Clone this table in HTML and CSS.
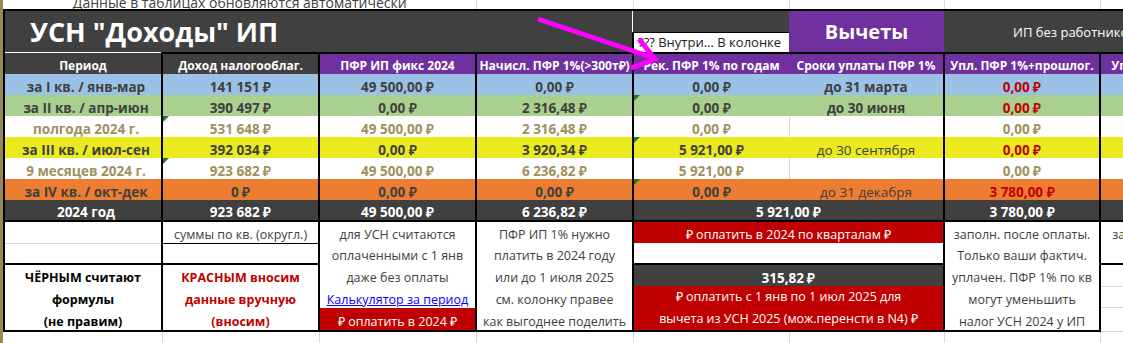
FILE: index.html
```html
<!DOCTYPE html>
<html lang="ru">
<head>
    <meta charset="UTF-8">
    <title>УСН Доходы ИП</title>
    <link rel="stylesheet" href="styles.css">
</head>
<body>
<div class="sheet">
    <table class="grid">
        <colgroup>
            <col class="w1"><col class="w2"><col class="w3"><col class="w4">
            <col class="w5"><col class="w6"><col class="w7"><col class="w8">
        </colgroup>

        <!-- верхняя строка, видна наполовину -->
        <tr class="r-top">
            <td colspan="3" class="note"><div class="cut"><span>Данные в таблицах обновляются автоматически</span></div></td>
            <td class="gl"></td><td class="gl"></td><td class="gl"></td><td class="gl"></td><td class="gl"></td>
        </tr>

        <!-- заголовок -->
        <tr class="r-t1">
            <td colspan="4" rowspan="2" class="title L">УСН "Доходы" ИП</td>
            <td class="dark"></td>
            <td rowspan="2" class="vych">Вычеты</td>
            <td colspan="2" rowspan="2" class="ipbez">ИП без работников (фиксированные взносы)</td>
        </tr>
        <tr class="r-t2">
            <td class="comment L">??? Внутри... В колонке</td>
        </tr>

        <tr class="head">
            <td class="dark L">Период</td>
            <td class="dark L T">Доход налогооблаг.</td>
            <td class="purple L T">ПФР ИП фикс 2024</td>
            <td class="purple L T">Начисл. ПФР 1%(&gt;300т₽)</td>
            <td class="purple L T">Рек. ПФР 1% по годам</td>
            <td class="purple T">Сроки уплаты ПФР 1%</td>
            <td class="purple L T">Упл. ПФР 1%+прошлог.</td>
            <td class="purple L T">Упл. налог УСН за год</td>
        </tr>

        <tr class="data blue">
            <td>за I кв. / янв-мар</td>
            <td>141 151 ₽</td>
            <td>49 500,00 ₽</td>
            <td>0,00 ₽</td>
            <td>0,00 ₽</td>
            <td class="c6">до 31 марта</td>
            <td class="red">0,00 ₽</td>
            <td></td>
        </tr>
        <tr class="data green">
            <td>за II кв. / апр-июн</td>
            <td>390 497 ₽</td>
            <td>0,00 ₽</td>
            <td>2 316,48 ₽</td>
            <td class="flag">0,00 ₽</td>
            <td class="c6">до 30 июня</td>
            <td class="red">0,00 ₽</td>
            <td></td>
        </tr>
        <tr class="data white">
            <td>полгода 2024 г.</td>
            <td class="flag">531 648 ₽</td>
            <td>49 500,00 ₽</td>
            <td>2 316,48 ₽</td>
            <td>0,00 ₽</td>
            <td class="c6"></td>
            <td>0,00 ₽</td>
            <td></td>
        </tr>
        <tr class="data yellow">
            <td>за III кв. / июл-сен</td>
            <td>392 034 ₽</td>
            <td>0,00 ₽</td>
            <td>3 920,34 ₽</td>
            <td class="flag">5 921,00 ₽</td>
            <td class="c6 thin">до 30 сентября</td>
            <td class="red">0,00 ₽</td>
            <td></td>
        </tr>
        <tr class="data white">
            <td>9 месяцев 2024 г.</td>
            <td class="flag">923 682 ₽</td>
            <td>49 500,00 ₽</td>
            <td>6 236,82 ₽</td>
            <td>5 921,00 ₽</td>
            <td class="c6"></td>
            <td>0,00 ₽</td>
            <td></td>
        </tr>
        <tr class="data orange">
            <td>за IV кв. / окт-дек</td>
            <td>0 ₽</td>
            <td>0,00 ₽</td>
            <td>0,00 ₽</td>
            <td class="flag">0,00 ₽</td>
            <td class="c6 thin">до 31 декабря</td>
            <td class="red">3 780,00 ₽</td>
            <td></td>
        </tr>
        <tr class="data total">
            <td>2024 год</td>
            <td>923 682 ₽</td>
            <td>49 500,00 ₽</td>
            <td>6 236,82 ₽</td>
            <td colspan="2">5 921,00 ₽</td>
            <td>3 780,00 ₽</td>
            <td></td>
        </tr>

        <!-- пояснения -->
        <tr class="info tall">
            <td class="L gb"></td>
            <td class="L R sum">суммы по кв. (округл.)</td>
            <td class="L R">для УСН считаются</td>
            <td class="L R">ПФР ИП 1% нужно</td>
            <td colspan="2" class="L R band">₽ оплатить в 2024 по кварталам ₽</td>
            <td class="L R">заполн. после оплаты.</td>
            <td class="L">заполн. после оплаты</td>
        </tr>
        <tr class="info">
            <td class="L"></td>
            <td class="L R"></td>
            <td class="L R">оплаченными с 1 янв</td>
            <td class="L R">платить в 2024 году</td>
            <td colspan="2" class="L R"></td>
            <td class="L R">Только ваши фактич.</td>
            <td class="L B"></td>
        </tr>
        <tr class="info tall">
            <td class="L R T legend">ЧЁРНЫМ считают</td>
            <td class="L R T legend red">КРАСНЫМ вносим</td>
            <td class="L R">даже без оплаты</td>
            <td class="L R">или до 1 июля 2025</td>
            <td colspan="2" class="L R T sumdark">315,82 ₽</td>
            <td class="L R">уплачен. ПФР 1% по кв</td>
            <td class="gb"></td>
        </tr>
        <tr class="info">
            <td class="L R legend">формулы</td>
            <td class="L R legend red">данные вручную</td>
            <td class="L R"><a href="#" class="calc">Калькулятор за период</a></td>
            <td class="L R">см. колонку правее</td>
            <td colspan="2" rowspan="2" class="L R B band two">₽ оплатить с 1 янв по 1 июл 2025 для<br>вычета из УСН 2025 (мож.перенсти в N4) ₽</td>
            <td class="L R">могут уменьшить</td>
            <td class="gb"></td>
        </tr>
        <tr class="info tall">
            <td class="L R B legend">(не правим)</td>
            <td class="L R B legend red">(вносим)</td>
            <td class="L R B band">₽ оплатить в 2024 ₽</td>
            <td class="L R B">как выгоднее поделить</td>
            <td class="L R B">налог УСН 2024 у ИП</td>
            <td class="gb"></td>
        </tr>
        <tr class="r-end">
            <td></td><td class="gl"></td><td class="gl"></td><td class="gl"></td>
            <td class="gl"></td><td class="gl"></td><td class="gl"></td><td class="gl"></td>
        </tr>
    </table>

    <svg class="arrow" width="700" height="90" viewBox="0 0 700 90">
        <line x1="535" y1="19" x2="651" y2="58" stroke="#ff00ff" stroke-width="5"/>
        <polyline points="636,39 652,59 628,68" fill="none" stroke="#ff00ff" stroke-width="5"/>
    </svg>
</div>
</body>
</html>
```

FILE: styles.css
```css
body {
    margin: 0;
    background-color: #948a54;
    font-family: "Open Sans", "Liberation Sans", sans-serif;
    overflow: hidden;
}
.sheet {
    position: relative;
    margin-left: 3px;
    width: 1120px;
    height: 343px;
    background-color: white;
    overflow: hidden;
}
.grid {
    border-collapse: collapse;
    table-layout: fixed;
    width: 1253px;
}
.w1 { width: 158px; }
.w2 { width: 157px; }
.w3 { width: 157px; }
.w4 { width: 157px; }
.w5 { width: 156px; }
.w6 { width: 155px; }
.w7 { width: 156px; }
.w8 { width: 157px; }

.grid td {
    box-sizing: border-box;
    height: 21px;
    padding: 0 2px;
    line-height: 16px;
    text-align: center;
    vertical-align: bottom;
    white-space: nowrap;
    overflow: hidden;
    font-size: 12.5px;
    color: #404040;
}

/* borders */
.L { border-left: 2px solid #000; }
.R { border-right: 2px solid #000; }
.T { border-top: 2px solid #000; }
.B { border-bottom: 2px solid #000; }
.gl { border-left: 1px solid #d9d9d9; }
.gb { border-bottom: 1px solid #d9d9d9; }

/* top row */
.r-top td {
    height: 10px;
    border-bottom: 2px solid #000;
}
.cut {
    height: 9px;
    overflow: hidden;
}
.cut span {
    display: block;
    margin-top: -4px;
    line-height: 14px;
    font-size: 14px;
    color: #404040;
}

/* title block */
.r-t1 td { height: 22px; }
.title {
    background-color: #404040;
    color: white !important;
    font-size: 27px !important;
    line-height: 30px !important;
    font-weight: bold;
    text-align: left !important;
    vertical-align: middle !important;
    padding-left: 25px !important;
}
.dark {
    background-color: #404040;
}
.vych {
    background-color: #7030a0;
    color: white !important;
    font-size: 20px !important;
    line-height: 24px !important;
    font-weight: bold;
    vertical-align: middle !important;
}
.ipbez {
    background-color: #404040;
    color: white !important;
    font-size: 13px !important;
    text-align: left !important;
    vertical-align: middle !important;
    padding-left: 69px !important;
}
.comment {
    background-color: white;
    border-top: 1px solid #000;
    color: #222 !important;
    font-size: 13px !important;
    text-align: left !important;
    vertical-align: middle !important;
    padding-left: 4px !important;
}

/* column headers */
.head td {
    color: white;
    font-weight: bold;
    font-size: 12px;
}
.purple {
    background-color: #7030a0;
}

/* data rows */
.data td {
    font-weight: bold;
    font-size: 13.5px;
    border-left: 2px solid #000;
}
.data td:first-child {
    padding-left: 8px;
}
.data td.c6 {
    border-left: none;
}
.data.white td.c6 {
    border-left: 1px solid #d9d9d9;
}
.data td.thin {
    font-weight: normal;
}
.blue td { background-color: #9bc2e6; }
.green td { background-color: #a9d08e; }
.yellow td { background-color: #eaea1e; }
.orange td { background-color: #ed7d31; }
.white td { color: #a0905e; }
.total td {
    background-color: #404040;
    color: white;
    border-bottom: 2px solid #000;
}
.data td.red { color: #c00000; }

.flag { position: relative; }
.flag::before {
    content: "";
    position: absolute;
    top: 0;
    left: 0;
    border-top: 6px solid #1e7b1e;
    border-right: 6px solid transparent;
}

/* notes below */
.info.tall td {
    height: 22px;
}
.sum {
    border-bottom: 1px solid #000;
}
.band {
    background-color: #c00000;
    color: white !important;
}
.two {
    line-height: 22px !important;
    vertical-align: middle !important;
}
.sumdark {
    background-color: #404040;
    color: white !important;
    font-weight: bold;
    font-size: 13.5px !important;
}
.legend {
    font-weight: bold;
    color: #000 !important;
}
.legend.red {
    color: #c00000 !important;
}
.calc {
    color: #0000ff;
}
.r-end td {
    height: 14px;
}

.arrow {
    position: absolute;
    top: 0;
    left: 0;
}
```
